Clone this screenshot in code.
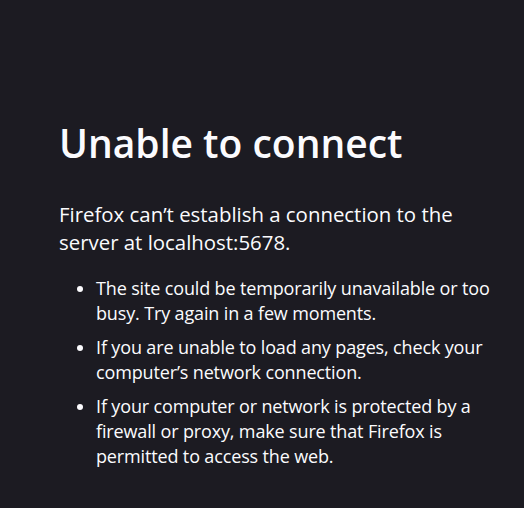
const reasons = [
  "The site could be temporarily unavailable or too busy. Try again in a few moments.",
  "If you are unable to load any pages, check your computer’s network connection.",
  "If your computer or network is protected by a firewall or proxy, make sure that Firefox is permitted to access the web.",
];

const App = () => {
  return (
    <div
      className="min-h-screen bg-[#1c1b22] text-[#fbfbfe]"
      style={{ fontFamily: '"Open Sans", "Noto Sans", sans-serif' }}
    >
      <div className="pt-[120px] pl-[59px] pr-[24px]">
        <h1 className="text-[39px] font-semibold leading-[46px]">Unable to connect</h1>
        <p className="mt-[34px] text-[20.4px] leading-[28px]">
          Firefox can’t establish a connection to the server at localhost:5678.
        </p>
        <ul className="mt-[20px] list-disc pl-[37px] text-[18px] leading-[25px] tracking-[-0.008em]">
          {reasons.map((text, i) => (
            <li key={i} className="mb-[9px]">
              {text}
            </li>
          ))}
        </ul>
      </div>
    </div>
  );
};

export default App;
